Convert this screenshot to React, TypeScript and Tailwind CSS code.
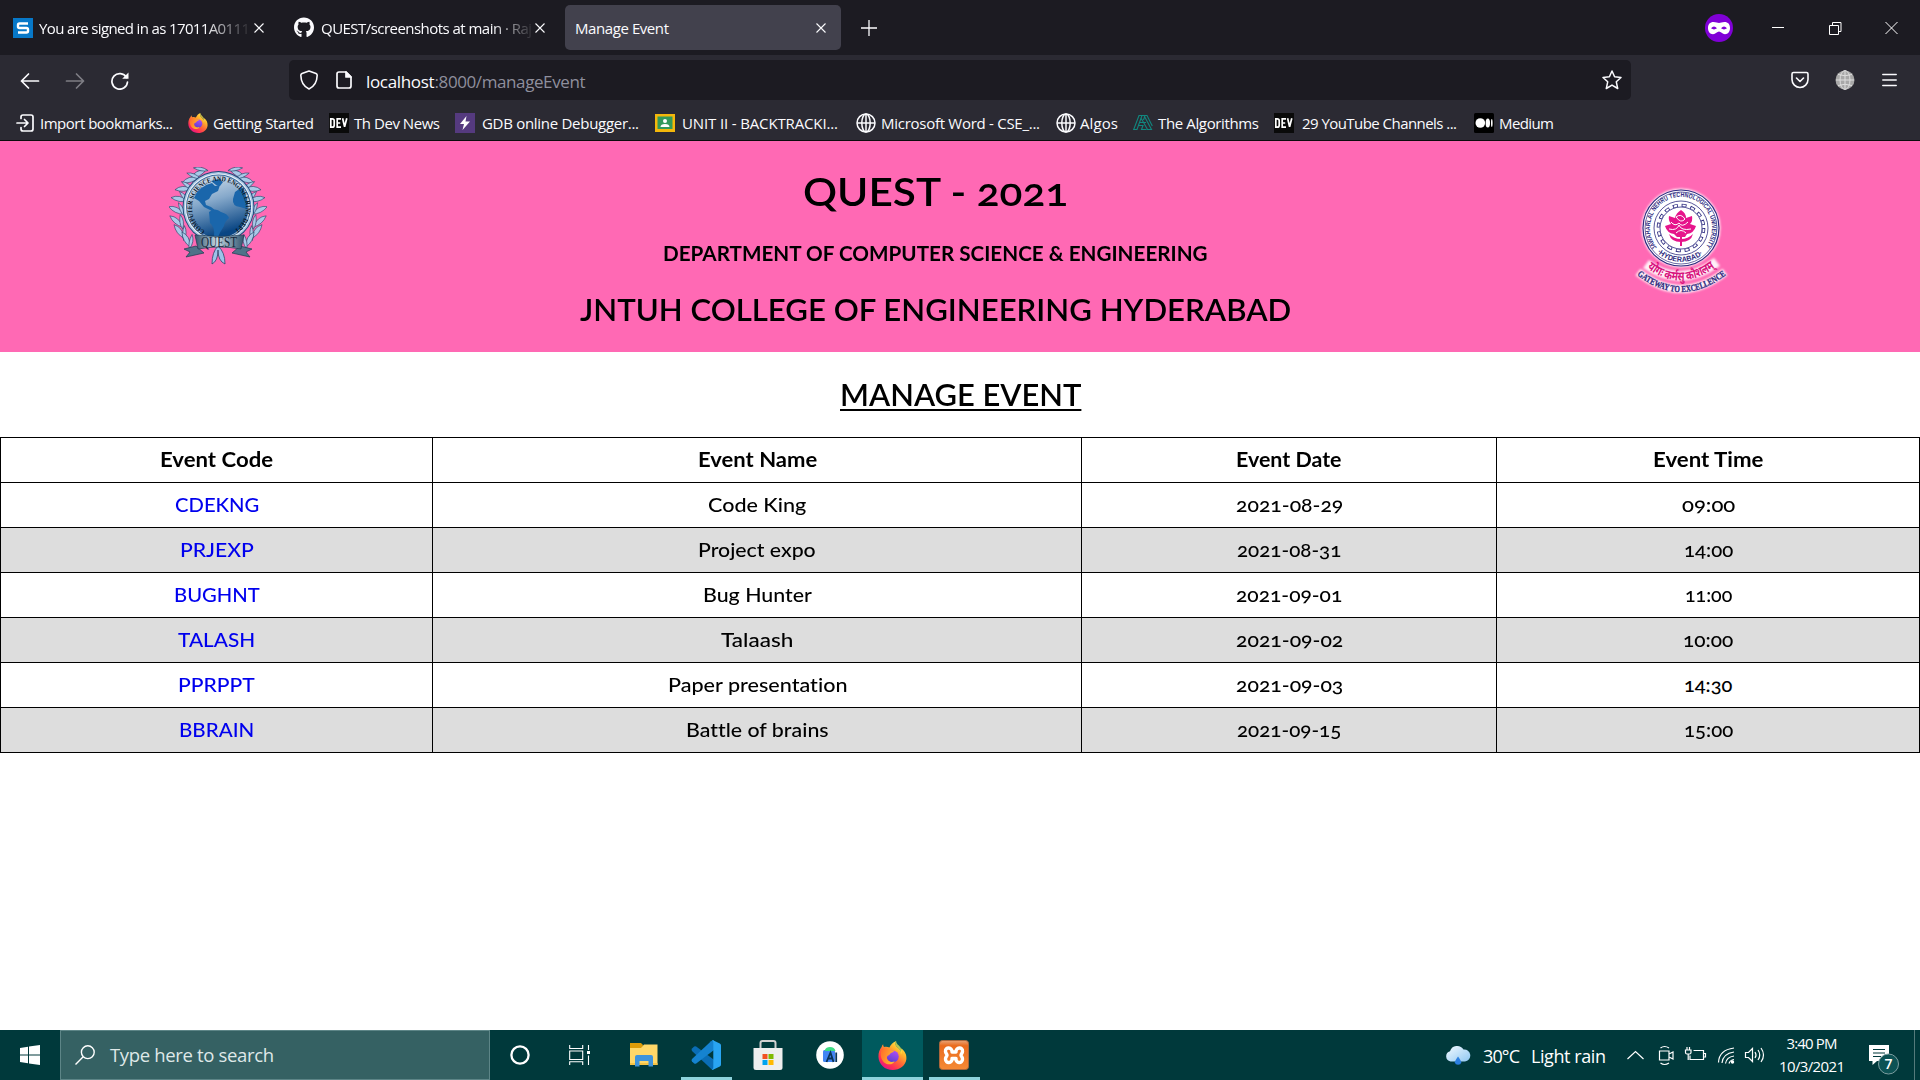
import { useLayoutEffect, useRef, useState } from "react";
import type { ReactNode } from "react";
import { FaGithub } from "react-icons/fa";

/** A single line of text whose tracking is adjusted to fill the given width. */
function Fit({ w, children, className = "" }: { w: number; children: string; className?: string }) {
  const ref = useRef<HTMLSpanElement>(null);
  const [spacing, setSpacing] = useState(0);
  useLayoutEffect(() => {
    const natural = ref.current!.getBoundingClientRect().width;
    setSpacing((w - natural) / Math.max(1, children.length - 1));
  }, [w, children]);
  return (
    <span className={`block shrink-0 whitespace-nowrap text-left ${className}`} style={{ width: w }}>
      <span ref={ref} style={{ letterSpacing: spacing }}>{children}</span>
    </span>
  );
}

/** A single line of text whose glyphs are widened to fill the given width. */
function Wide({ w, children, className = "" }: { w: number; children: string; className?: string }) {
  const ref = useRef<HTMLSpanElement>(null);
  const [scale, setScale] = useState(1);
  useLayoutEffect(() => {
    setScale(w / ref.current!.offsetWidth);
  }, [w, children]);
  return (
    <span className={`block shrink-0 whitespace-nowrap text-left ${className}`} style={{ width: w }}>
      <span ref={ref} className="inline-block origin-left" style={{ transform: `scaleX(${scale})` }}>{children}</span>
    </span>
  );
}

function CloseIcon() {
  return (
    <svg viewBox="0 0 10 10" className="h-2.5 w-2.5 shrink-0" stroke="#fbfbfe" strokeWidth="1.1">
      <path d="M.5 .5l9 9M9.5 .5l-9 9" />
    </svg>
  );
}

function FirefoxIcon({ id, className }: { id: string; className: string }) {
  return (
    <svg viewBox="0 0 32 32" className={className}>
      <defs>
        <linearGradient id={`${id}a`} x1="0.85" y1="0.05" x2="0.2" y2="0.95">
          <stop offset="0" stopColor="#fff44f" />
          <stop offset="0.3" stopColor="#ffb32c" />
          <stop offset="0.55" stopColor="#ff6b36" />
          <stop offset="0.8" stopColor="#ff2f55" />
          <stop offset="1" stopColor="#e31587" />
        </linearGradient>
        <linearGradient id={`${id}b`} x1="0.7" y1="0" x2="0.3" y2="1">
          <stop offset="0" stopColor="#b04df5" />
          <stop offset="1" stopColor="#5b3fd0" />
        </linearGradient>
        <linearGradient id={`${id}c`} x1="0" y1="0" x2="1" y2="0.4">
          <stop offset="0" stopColor="#ff6a2a" />
          <stop offset="1" stopColor="#ffb52e" />
        </linearGradient>
      </defs>
      <path fill={`url(#${id}a)`} d="M20 0c-1.500 3.200-.8 5.200 1.600 7.300 1.800 1.500 2.900 2.900 3.300 4.500.8-.9.900-2.300.5-3.800 4.400 3 6.400 7.300 5.900 12.200C30.500 27.200 24 32 16.200 32 7.800 32 .7 25.800.5 17.300.4 12.500 1.700 9.200 4 6.500c.2-.9.700-2.100 1.700-3-.1 1.300.2 2.400.9 3.200 2.300-.6 4.200-.3 6 .6 1.400-3.200 3.700-5.900 7.400-7.300z" />
      <circle cx="16.300" cy="17" r="6.600" fill={`url(#${id}b)`} />
      <path fill={`url(#${id}c)`} d="M3.500 11c2.400-3.300 6.600-3.900 10.300-1.200 1.500.6 2.800.7 4 .6-.2 1.700-2.500 2-4.200 3.400-.6.600-.8 1.500-1.800 1.900-1.300.5-2.500 1.800-1.900 3.800 1 3 5 4.600 8.500 2.800-1.600 3.800-7.500 4.800-11.700 1.300C3.500 20.700 2.300 15.700 3.500 11z" />
      <path fill="#fff44f" opacity=".7" d="M20 0c-1.500 3.200-.8 5.200 1.600 7.300 2.400 2 3.800 4.200 3.700 8.200 2-4.500.3-8-2.300-10.500C21 3.200 20 2 20 0z" />
    </svg>
  );
}

function GlobeIcon() {
  return (
    <svg viewBox="0 0 20 20" className="h-5 w-5 shrink-0" fill="none" stroke="#fbfbfe" strokeWidth="1.500">
      <circle cx="10" cy="10" r="9" />
      <ellipse cx="10" cy="10" rx="4.200" ry="9" />
      <path d="M10 1v18M1 10h18" />
    </svg>
  );
}

function DevIcon() {
  return (
    <svg viewBox="0 0 20 20" className="h-5 w-5 shrink-0">
      <path fill="#0a0a0a" d="M0 0h20v20H0z" />
      <path fill="none" stroke="#fff" strokeWidth="1.700" d="M1.800 5.800v8.400h1.400q2 0 2-2V7.800q0-2-2-2zM12 5.800H8.200v8.400H12M8.200 10h3M13.600 5.200l2 8.600 2.200-8.600" />
    </svg>
  );
}

function Tabs() {
  return (
    <div className="flex h-[55px] items-center bg-[#1c1b22] text-[15px] text-[#fbfbfe]">
      <svg viewBox="0 0 20 20" className="ml-[13px] h-5 w-5 shrink-0">
        <path fill="#0778c8" d="M0 0h20v20H0z" />
        <path fill="none" stroke="#fff" strokeWidth="2.400" strokeLinejoin="round" d="M15 5.500H6.500q-1.500 0-1.500 1.500v1.500Q5 10 6.500 10h7q1.500 0 1.500 1.500V13q0 1.500-1.500 1.500H5" />
      </svg>
      <div className="ml-1.5 mt-px w-[215px] overflow-hidden [mask-image:linear-gradient(to_right,#000_165px,transparent_213px)]">
        <Fit w={211}>You are signed in as 17011A0111</Fit>
      </div>
      <CloseIcon />
      <FaGithub className="ml-[30px] h-[21px] w-5 shrink-0" />
      <div className="ml-[7px] mt-px w-[215px] overflow-hidden [mask-image:linear-gradient(to_right,#000_170px,transparent_214px)]">
        <Fit w={211}>QUEST/screenshots at main · Raj</Fit>
      </div>
      <span className="-ml-px"><CloseIcon /></span>
      <div className="ml-5 flex h-[45px] w-[276px] items-center justify-between rounded-[5px] bg-[#42414d] pl-2.5 pr-[15px]">
        <Fit w={94} className="mt-px">Manage Event</Fit>
        <CloseIcon />
      </div>
      <svg viewBox="0 0 16 16" className="ml-5 h-4 w-4" stroke="#fbfbfe" strokeWidth="1.300">
        <path d="M8 0v16M0 8h16" />
      </svg>
      <svg viewBox="0 0 28 28" className="ml-auto h-7 w-7">
        <circle cx="14" cy="14" r="14" fill="#8000d7" />
        <path fill="#fff" d="M8.500 8c2.500 0 4 1 5.500 1s3-1 5.500-1c3.500 0 5.500 2.200 5.500 6 0 3.500-2 6.200-5 6.200-2.700 0-4.200-2.700-6-2.700s-3.300 2.700-6 2.700c-3 0-5-2.700-5-6.200 0-3.800 2-6 5.500-6z" />
        <path fill="#8000d7" d="M6 14.300q3-3.600 6 0-3 2.200-6 0zM16 14.300q3-3.600 6 0-3 2.200-6 0z" />
      </svg>
      <svg viewBox="0 0 126 14" className="ml-[39px] mr-[22px] h-3.5 w-[126px]" fill="none" stroke="#fff">
        <path d="M0 6.500h12M57.500 4.500h9v9h-9zM60.500 4V1.500h8.500v9H67M113.500 1l12 12M125.500 1l-12 12" />
      </svg>
    </div>
  );
}

function Toolbar() {
  return (
    <div className="flex h-[50px] items-center bg-[#2b2a33] text-[#fbfbfe]">
      <svg viewBox="0 0 110 20" className="ml-5 h-5 w-[110px] shrink-0" fill="none" stroke="#fbfbfe" strokeWidth="1.700">
        <path strokeLinecap="round" strokeLinejoin="round" d="M18.500 11H1.500M8.500 4l-7 7 7 7" />
        <path opacity=".4" strokeLinecap="round" strokeLinejoin="round" d="M46.500 11h17M56.500 4l7 7-7 7" />
        <path d="M106.500 7.500A7.800 7.800 0 1 0 107.500 12" strokeLinecap="round" />
        <path d="M108.500 2.500v6.300h-6.300z" fill="#fbfbfe" stroke="none" />
      </svg>
      <div className="ml-[159px] flex h-10 w-[1342px] shrink-0 items-center rounded-[5px] bg-[#1c1b22] pl-[11px] pr-[9px]">
        <svg viewBox="0 0 18 20" className="h-5 w-[18px]" fill="none" stroke="#fbfbfe" strokeWidth="1.600" strokeLinejoin="round">
          <path d="M9 1l7 2.500c1 .4 1.200 1 1.200 1.800C17 12 14.500 16.500 9 19 3.500 16.500 1 12 .8 5.300.8 4.500 1 3.900 2 3.500z" />
        </svg>
        <svg viewBox="0 0 16 18" className="ml-[18px] h-[18px] w-4" fill="none" stroke="#fbfbfe" strokeWidth="1.700" strokeLinejoin="round">
          <path d="M3 1h7l5 5v9q0 2-2 2H3q-2 0-2-2V3q0-2 2-2z" />
          <path fill="#fbfbfe" d="M10 1v5h5z" />
        </svg>
        <div className="ml-3.5 mt-[3px] flex text-[17px]">
          <Fit w={68.500}>localhost</Fit>
          <Fit w={151} className="text-[#8f8f9d]">:8000/manageEvent</Fit>
        </div>
        <svg viewBox="0 0 20 20" className="ml-auto h-5 w-5" fill="none" stroke="#fbfbfe" strokeWidth="1.500" strokeLinejoin="round">
          <path d="M10 1l2.600 5.800 6.400.7-4.700 4.300 1.400 6.700L10 15.100l-5.700 3.400 1.400-6.700L1 7.500l6.400-.7z" />
        </svg>
      </div>
      <svg viewBox="0 0 18 18" className="ml-[160px] h-[18px] w-[18px]" fill="none" stroke="#fbfbfe" strokeWidth="1.600" strokeLinecap="round" strokeLinejoin="round">
        <path d="M2.500 1.500h13q1.500 0 1.500 1.500v5.500a8 8 0 0 1-16 0V3q0-1.500 1.500-1.500zM5.500 7L9 10.500 12.500 7" />
      </svg>
      <svg viewBox="0 0 20 20" className="ml-[26px] h-5 w-5" fill="none" stroke="#dedede" strokeWidth="1">
        <circle cx="10" cy="10" r="9.500" fill="#a8a8a8" stroke="none" />
        <ellipse cx="10" cy="10" rx="5" ry="9.500" />
        <path d="M10 .5v19M1 10h18M3 4.500q7 2.500 14 0M3 15.500q7-2.500 14 0" />
      </svg>
      <svg viewBox="0 0 15 14" className="ml-[27px] h-3.5 w-[15px]" stroke="#fbfbfe" strokeWidth="1.500" strokeLinecap="round">
        <path d="M.8 1.500h13.400M.8 7h13.400M.8 12.500h13.400" />
      </svg>
    </div>
  );
}

function Bookmarks() {
  return (
    <div className="flex h-[36px] items-center border-b border-[#0c0c0d] bg-[#2b2a33] text-[15px] text-[#fbfbfe]">
      <svg viewBox="0 0 18 18" className="ml-4 h-[18px] w-[18px] shrink-0" fill="none" stroke="#fbfbfe" strokeWidth="1.700" strokeLinecap="round" strokeLinejoin="round">
        <path d="M5 4.500V3q0-2 2-2h8q2 0 2 2v12q0 2-2 2H7q-2 0-2-2v-1.500M1 9h10.500M8.500 5.500L12 9l-3.500 3.500" />
      </svg>
      <Fit w={133} className="ml-1.5 mt-0.5">Import bookmarks...</Fit>
      <FirefoxIcon id="bm" className="ml-[15px] h-5 w-5 shrink-0" />
      <Fit w={101} className="ml-[5px] mt-0.5">Getting Started</Fit>
      <span className="ml-[15px]"><DevIcon /></span>
      <Fit w={86} className="ml-[5px] mt-0.5">Th Dev News</Fit>
      <svg viewBox="0 0 20 20" className="ml-[15px] h-5 w-5 shrink-0">
        <path fill="#553a7f" d="M0 0h20v20H0z" />
        <path fill="#fff" d="M11.500 3L5 11h4l-1.500 6L15 8.500h-4.500z" />
      </svg>
      <Fit w={157} className="ml-[7px] mt-0.5">GDB online Debugger...</Fit>
      <svg viewBox="0 0 20 20" className="ml-4 h-5 w-5 shrink-0">
        <path fill="#f4b70b" d="M0 1h20v18H0z" />
        <path fill="#32995b" d="M2.500 3.500h15v12.500h-15z" />
        <circle cx="10" cy="8" r="2" fill="#fff" />
        <path fill="#fff" d="M5.500 14q0-3 4.500-3t4.500 3z" />
      </svg>
      <Fit w={156} className="ml-[7px] mt-0.5">UNIT II - BACKTRACKI...</Fit>
      <span className="ml-[18px]"><GlobeIcon /></span>
      <Fit w={159} className="ml-[5px] mt-0.5">Microsoft Word - CSE_...</Fit>
      <span className="ml-4"><GlobeIcon /></span>
      <Fit w={38} className="ml-1 mt-0.5">Algos</Fit>
      <svg viewBox="0 0 20 20" className="ml-[15px] h-5 w-5 shrink-0" fill="none" stroke="#11877f" strokeWidth="1.100">
        <path d="M.7 16.500L6 2.500h3L4 16.500zM9 2.500h2l7.500 14h-4L8 5M6 9.500h7M5 12.500h5l-1.500 4h5M10.500 7l1.500-4.500h2L19.300 13" />
      </svg>
      <Fit w={101} className="ml-[5px] mt-0.5">The Algorithms</Fit>
      <span className="ml-[15px]"><DevIcon /></span>
      <Fit w={155} className="ml-2 mt-0.5">29 YouTube Channels ...</Fit>
      <svg viewBox="0 0 20 20" className="ml-[17px] h-5 w-5 shrink-0" fill="#fff">
        <rect width="20" height="20" rx="1.500" fill="#000" />
        <circle cx="6.300" cy="10" r="4.800" />
        <ellipse cx="13.800" cy="10" rx="2.200" ry="4.500" />
        <ellipse cx="17.800" cy="10" rx="0.800" ry="4" />
      </svg>
      <Fit w={55} className="ml-[5px] mt-0.5">Medium</Fit>
    </div>
  );
}

const laurel = [
  [29, 7, -60], [21, 13, -48], [14, 22, -35], [10, 32, -20], [7, 43, -5], [7, 54, 10], [10, 64, 22], [17, 72, 30],
];

function QuestLogo() {
  const leaves = (
    <g fill="#a9c9e8" stroke="#27476b" strokeWidth="0.600">
      {laurel.map(([x, y, r]) => (
        <g key={y} transform={`translate(${x} ${y}) rotate(${r})`}>
          <path d="M-7-4Q2-5 8 5-2 4-7-4z" />
          <path d="M3-7Q9-2 8 7 3 2 3-7z" />
        </g>
      ))}
    </g>
  );
  return (
    <svg viewBox="0 0 98 98" className="h-[98px] w-[98px]">
      <defs>
        <linearGradient id="sea" x1="0" y1="0" x2="0.3" y2="1">
          <stop offset="0" stopColor="#d5e1ec" />
          <stop offset="0.450" stopColor="#86a9cb" />
          <stop offset="1" stopColor="#0a4684" />
        </linearGradient>
        <linearGradient id="ribbon" x1="0" y1="0" x2="1" y2="0">
          <stop offset="0" stopColor="#33566f" />
          <stop offset="0.450" stopColor="#c4d6e2" />
          <stop offset="1" stopColor="#33566f" />
        </linearGradient>
        <path id="questArc" d="M36 64A27 27 0 1 1 64 64" />
      </defs>
      {leaves}
      <g transform="translate(98 0) scale(-1 1)">{leaves}</g>
      <g transform="translate(0 1)">
        <circle cx="49.500" cy="39" r="36" fill="#1f4a7a" />
        <circle cx="49.500" cy="39" r="35" fill="#a9c6e2" />
        <circle cx="49.500" cy="39" r="33.500" fill="#f1f6fb" />
        <circle cx="49.500" cy="39" r="32.500" fill="#3c6c9f" />
        <circle cx="49.500" cy="39" r="31.500" fill="#c3d5e6" />
        <circle cx="49.500" cy="40" r="30" fill="url(#sea)" />
        <path fill="#1a66ab" d="M25 30q5-12 18-15l3 3 5-1-2 6-6 3-3 5-4 2 1 4 5 2 4 3-3 1-8-4-5-6zM42 13l8-2 4 3-3 4-4-1zM40 44q6-5 12 0 7 2 8 6-4 3-5 8-4 6-6 11l-4-1q1-9-4-13zM66 24l7-5q6 9 5 22l-7-2q-8-1-7-8z" />
      </g>
      <text fill="#07131f" className="font-['Liberation_Serif'] text-[7px] font-bold">
        <textPath href="#questArc" textLength="138" lengthAdjust="spacingAndGlyphs">COMPUTER SCIENCE AND ENGINEERING DEPT</textPath>
      </text>
      <path fill="#9cc3ea" stroke="#27476b" strokeWidth="0.800" d="M49 79q-6 6-6 18 6-3 6-14 0 11 7 14 0-12-7-18z" />
      <path fill="#4f7289" stroke="#1c3950" strokeWidth="0.700" d="M27 79l-12 3 6 3-4 5 18-4zM71 79l12 3-6 3 4 5-18-4z" />
      <path fill="url(#ribbon)" stroke="#1c3950" strokeWidth="0.700" d="M26 68q24 3 49 0l-3 14q-22-4-43 0z" />
      <text x="50" y="79.500" textAnchor="middle" textLength="36" lengthAdjust="spacingAndGlyphs" fill="#16293d" className="font-['Liberation_Serif'] text-[14px]">QUEST</text>
    </svg>
  );
}

function JntuLogo() {
  return (
    <svg viewBox="0 0 100 116" className="h-[116px] w-[100px] overflow-visible">
      <defs>
        <path id="jntuTop" d="M26 59.500A31 31 0 1 1 74 59.500" />
        <path id="jntuBottom" d="M26 64.500A35.500 35.500 0 0 0 74 64.500" />
        <path id="mottoArc" d="M16 80Q49 106 86 78" />
        <path id="gatewayArc" d="M6 87Q50 121 95 87" />
        <filter id="glow" x="-20%" y="-20%" width="140%" height="140%">
          <feGaussianBlur stdDeviation="1.300" />
        </filter>
      </defs>
      <g filter="url(#glow)" fill="none" stroke="#fff" opacity=".9">
        <circle cx="50" cy="40" r="39" fill="#fff" />
        <path d="M15 76Q50 101 86 74" strokeWidth="10" />
        <path d="M7 84Q50 118 94 84" strokeWidth="8" />
      </g>
      <circle cx="50" cy="40" r="38" fill="#fff" stroke="#2d2b80" strokeWidth="1.200" />
      <circle cx="50" cy="40" r="36" fill="none" stroke="#2d2b80" strokeWidth="0.700" />
      <circle cx="50" cy="40" r="27" fill="none" stroke="#2d2b80" strokeWidth="0.800" />
      <circle cx="50" cy="40" r="22.800" fill="none" stroke="#2d2b80" strokeWidth="3" strokeDasharray="5 3.950" />
      <circle cx="50" cy="40" r="22.600" fill="none" stroke="#fff" strokeWidth="1.800" strokeDasharray="3.200 5.675" strokeDashoffset="-0.900" />
      <circle cx="50" cy="40" r="21" fill="#fff" stroke="#2d2b80" strokeWidth="0.800" />
      <g fill="#e6148b">
        <path d="M50 22q5 3 5 8l6-2q1 5-2 8l6 2q-2 7-9 8l-2 3h-8l-3-3q-7-1-9-8l6-2q-3-4-2-8l6 2q1-5 6-8z" />
        <path d="M38 46q5 5 12 5t12-5q-2 8-12 8t-12-8z" />
        <path d="M49 47h2v11h-2z" />
      </g>
      <path fill="none" stroke="#fff" strokeWidth="1" d="M45 29q5-4 9 2-4 5-9-2zM40 34q4 5 8 1 3 5 9-1M38 41q8 2 10-4 2 6 12 4M45 45q5-5 10 0" />
      <text fill="#2d2b80" className="font-['Liberation_Sans'] text-[6.500px] font-bold">
        <textPath href="#jntuTop" textLength="138" lengthAdjust="spacingAndGlyphs">JAWAHARLAL NEHRU TECHNOLOGICAL UNIVERSITY</textPath>
      </text>
      <text fill="#2d2b80" className="font-['Liberation_Sans'] text-[7.500px] font-bold">
        <textPath href="#jntuBottom" textLength="50" lengthAdjust="spacingAndGlyphs">·HYDERABAD·</textPath>
      </text>
      <text fill="#d8127d" className="font-['Noto_Sans','Noto_Sans_Devanagari',sans-serif] text-[12.500px] font-bold">
        <textPath href="#mottoArc" textLength="74" lengthAdjust="spacingAndGlyphs">योगः कर्मसु कौशलम्</textPath>
      </text>
      <text fill="#2d2b80" stroke="#2d2b80" strokeWidth="0.300" className="font-['Liberation_Serif'] text-[9px] font-bold">
        <textPath href="#gatewayArc" textLength="97" lengthAdjust="spacingAndGlyphs">GATEWAY TO EXCELLENCE</textPath>
      </text>
    </svg>
  );
}

function Banner() {
  return (
    <header className="flex h-[211px] items-start bg-[#ff69b4] text-black">
      <div className="ml-[169px] mt-[26px] w-[98px] shrink-0"><QuestLogo /></div>
      <div className="ml-[312px] flex w-[712px] flex-col items-center font-semibold">
        <Wide w={265} className="mt-[26px] text-[39px] leading-[48px] [font-variant-numeric:oldstyle-nums]">QUEST - 2021</Wide>
        <Wide w={545} className="mt-6 text-[21px] font-bold leading-7">DEPARTMENT OF COMPUTER SCIENCE & ENGINEERING</Wide>
        <Wide w={711} className="mt-[22px] text-[30px] leading-10">JNTUH COLLEGE OF ENGINEERING HYDERABAD</Wide>
      </div>
      <div className="ml-[340px] mt-[47px]"><JntuLogo /></div>
    </header>
  );
}

const headings: [string, number][] = [["Event Code", 113], ["Event Name", 119], ["Event Date", 106], ["Event Time", 110]];

const events: [string, number][][] = [
  [["CDEKNG", 84], ["Code King", 98], ["2021-08-29", 107], ["09:00", 53]],
  [["PRJEXP", 74], ["Project expo", 118], ["2021-08-31", 104], ["14:00", 49]],
  [["BUGHNT", 86], ["Bug Hunter", 109], ["2021-09-01", 106], ["11:00", 47]],
  [["TALASH", 77], ["Talaash", 72], ["2021-09-02", 107], ["10:00", 50]],
  [["PPRPPT", 77], ["Paper presentation", 179], ["2021-09-03", 107], ["14:30", 48]],
  [["BBRAIN", 75], ["Battle of brains", 143], ["2021-09-15", 104], ["15:00", 49]],
];

function EventTable() {
  return (
    <div className="border-l border-t border-black text-[20px] font-medium text-black [font-variant-ligatures:none] [font-variant-numeric:oldstyle-nums]">
      <div className="grid grid-cols-[432px_649px_415px_423px] font-bold">
        {headings.map(([label, w]) => (
          <div key={label} className="flex h-[45px] items-center justify-center border-b border-r border-black pb-0.5">
            <Wide w={w}>{label}</Wide>
          </div>
        ))}
      </div>
      {events.map((row) => (
        <div key={row[0][0]} className="grid grid-cols-[432px_649px_415px_423px] odd:bg-[#ddd]">
          {row.map(([label, w], i) => (
            <div key={label} className={`flex h-[45px] items-center justify-center border-b border-r border-black pb-0.5 ${i === 0 ? "text-[#0000ee]" : ""}`}>
              <Wide w={w}>{label}</Wide>
            </div>
          ))}
        </div>
      ))}
    </div>
  );
}

function TaskButton({ children, open, active, className = "" }: { children: ReactNode; open?: boolean; active?: boolean; className?: string }) {
  return (
    <div className={`flex h-[50px] shrink-0 items-center justify-center border-b-[3px] pt-[3px] ${open ? "border-[#8ed3dc]" : "border-transparent"} ${active ? "bg-[#005a5e]" : ""} ${className}`}>
      {children}
    </div>
  );
}

function Taskbar() {
  return (
    <footer className="flex h-[50px] items-center bg-[#00393b] text-white">
      <svg viewBox="0 0 20 20" className="ml-5 h-5 w-5 shrink-0" fill="#fff">
        <path d="M0 3l8-1.200v7.700H0zM9 1.600L20 0v9.500H9zM0 10.500h8v7.700L0 17zM9 10.500h11V20L9 18.400z" />
      </svg>
      <div className="ml-5 flex h-[50px] w-[430px] shrink-0 items-center border border-[#5d8587] bg-[#356163] pl-3.5 text-[#dfe8e8]">
        <svg viewBox="0 0 20 20" className="h-5 w-5" fill="none" stroke="#fff" strokeWidth="1.400">
          <circle cx="12.800" cy="7.200" r="6.400" />
          <path d="M8.200 11.800L.5 19.500" />
        </svg>
        <Fit w={164} className="ml-[15px] text-[18.500px]">Type here to search</Fit>
      </div>
      <svg viewBox="0 0 20 20" className="ml-5 h-5 w-5 shrink-0" fill="none" stroke="#fff" strokeWidth="2.300">
        <circle cx="10" cy="10" r="8.600" />
      </svg>
      <svg viewBox="0 0 21 20" className="ml-[39px] h-5 w-[21px] shrink-0" fill="none" stroke="#fff" strokeWidth="1.100">
        <path d="M.7 0v3.500h13V0M.7 6h13v8.500H.7zM.7 20v-3.300h13V20M19.500 0v5M19.500 10.500V20" />
        <path fill="#fff" stroke="none" d="M18 6h3v3h-3z" />
      </svg>
      <svg viewBox="0 0 28 24" className="ml-10 h-6 w-7 shrink-0">
        <path fill="#dd9b08" d="M0 0h11l2 2-1 4H0z" />
        <path fill="#ffd768" d="M0 5h11l3-3.500h13.500V22H0z" />
        <path fill="#f6c344" d="M0 20h27.500v2H0z" />
        <path fill="#3d93dc" d="M5 23.500V14q0-2 2-2h14q2 0 2 2v9.500h-4.500V18h-9v5.500z" />
      </svg>
      <TaskButton open className="ml-[23px] w-[51px]">
        <svg viewBox="0 0 30 30" className="mr-px h-[30px] w-[30px]">
          <path fill="#0a6db5" d="M1 8.500l2.200-2q1-.7 2 0L28 23.500 22 29.800q-1.200-.3-2-1L1 11q-1-1.200 0-2.500z" />
          <path fill="#1583d0" d="M1 21.500l2.200 2q1 .7 2 0L23 10V.200q-1.500 0-3 1L1 19q-1 1.200 0 2.500z" />
          <path fill="#29a5f3" d="M22 .2L28.800 3.400q1.200.7 1.200 2v19.200q0 1.300-1.200 2L22 29.800q-.8 0-1.500-.5 1.800.2 1.800-1.800v-25Q22.300.500 20.500.700 21.200.200 22 .200z" />
        </svg>
      </TaskButton>
      <svg viewBox="0 0 30 30" className="ml-[21px] h-[30px] w-[30px] shrink-0">
        <path fill="none" stroke="#d0d0d0" strokeWidth="2" d="M7.500 10V3q0-2 2-2h11q2 0 2 2v7" />
        <path fill="#eee" d="M.5 8h29v19.500q0 2.500-2.500 2.500H3q-2.500 0-2.500-2.500z" />
        <path fill="#f25022" d="M9.500 14h5v5h-5z" />
        <path fill="#7fba00" d="M15.500 14h5v5h-5z" />
        <path fill="#00a4ef" d="M9.500 20h5v5h-5z" />
        <path fill="#ffb900" d="M15.500 20h5v5h-5z" />
      </svg>
      <svg viewBox="0 0 28 28" className="ml-[33px] h-7 w-7 shrink-0">
        <circle cx="14" cy="14" r="13.800" fill="#fff" />
        <rect x="7" y="9" width="12" height="12" rx="1.500" fill="#4285f4" />
        <path fill="#3ddc84" d="M8.500 10q1-4 5.500-4t5.500 4z" />
        <path fill="none" stroke="#0a3358" strokeWidth="1.800" d="M10.500 21l4-9.500 3 9.500M12 17.500h5M20.200 11.500V21" />
      </svg>
      <TaskButton open active className="ml-[18px] w-[61px]">
        <FirefoxIcon id="tb" className="mr-px h-[29px] w-[29px]" />
      </TaskButton>
      <TaskButton open className="ml-1.5 w-[51px]">
        <svg viewBox="0 0 30 30" className="mr-px h-[30px] w-[30px]">
          <defs>
            <linearGradient id="xampp" x1="0" y1="0" x2="0" y2="1">
              <stop offset="0" stopColor="#e9a477" />
              <stop offset="0.180" stopColor="#ea6b1e" />
              <stop offset="1" stopColor="#f58a36" />
            </linearGradient>
          </defs>
          <rect x="0.500" y="0.500" width="29" height="29" rx="3" fill="url(#xampp)" stroke="#a9663c" />
          <path fill="none" stroke="#fff" strokeWidth="3.400" strokeLinecap="round" strokeLinejoin="round" d="M13 12C13.500 7 6 6.500 6.500 11.500 6.700 13.500 8 14 8 15.200S6.500 17 6.500 19C6.500 24 13.500 23.500 13 18.500H17C16.500 23.500 23.500 24 23.500 19 23.500 17 22 16.400 22 15.200S23.300 13.500 23.500 11.500C24 6.500 16.500 7 17 12z" />
        </svg>
      </TaskButton>

      <svg viewBox="0 0 26 20" className="ml-auto h-5 w-[26px] shrink-0">
        <defs>
          <linearGradient id="cloud" x1="0" y1="0" x2="1" y2="1">
            <stop offset="0" stopColor="#f3faff" />
            <stop offset="1" stopColor="#8fc7f2" />
          </linearGradient>
        </defs>
        <path fill="url(#cloud)" d="M5.500 16.500a5.300 5.300 0 0 1-.5-10.300A7.500 7.500 0 0 1 18.500 4.500a6 6 0 1 1 1.500 12z" />
        <path fill="#2d7fe0" d="M13 11.500q3.300 4.500 3.300 6a3.300 2.800 0 0 1-6.500 0q0-1.500 3.200-6z" />
      </svg>
      <Fit w={37} className="ml-3 mt-0.5 text-[18px]">30°C</Fit>
      <Fit w={75} className="ml-[11px] mt-0.5 text-[18px]">Light rain</Fit>
      <svg viewBox="0 0 140 24" className="ml-[21px] h-6 w-[140px] shrink-0" fill="none" stroke="#fff" strokeWidth="1.200">
        <path d="M.5 16L8.500 8.500l8 7.500" />
        <path d="M32.500 8h9.500v9h-9.500zM42 11l4-2v7l-4-2M33.500 5q4-3 8.500 0M33.500 20q4 3 8.500 0" />
        <path d="M66.500 7.500h10v9h-13.500v-4M76.500 10.500h2v3.500h-2M60 4v3M62.500 4v3M58.500 7h5.500v2.500q0 1.500-1.500 1.500h-2.500Q58.500 11 58.500 9.500zM61.200 11v6" />
        <path d="M91.500 19.500Q92 7 107 5M95 20Q96 10.500 107 9M98.500 20.500Q99.500 14 107 13M102 20.500q1-3.500 5-4" />
        <circle cx="105.500" cy="19" r="1.700" fill="#fff" stroke="none" />
        <path d="M118.500 9.500h3l4-4v13l-4-4h-3zM128 9q2 3 0 6M131 7q3.500 5 0 10M134 5q5 7 0 14" />
      </svg>
      <div className="ml-3 flex w-[66px] shrink-0 flex-col items-center text-[15px] leading-[23px]">
        <Fit w={51}>3:40 PM</Fit>
        <Fit w={66}>10/3/2021</Fit>
      </div>
      <svg viewBox="0 0 32 32" className="ml-6 mt-[3px] h-8 w-8 shrink-0 overflow-visible">
        <path fill="#fff" d="M0 4h20v16H8l-4.500 4v-4H0z" />
        <path stroke="#00393b" strokeWidth="1.200" d="M4 8.500h12M4 12h12M4 15.500h8" />
        <circle cx="19.500" cy="23" r="10" fill="#0d5254" stroke="#7c9ea0" />
        <text x="19.500" y="28" textAnchor="middle" fill="#fff" className="text-[14px] font-semibold">7</text>
      </svg>
      <div className="ml-[13px] mr-[5px] h-[50px] w-px bg-[#547a7b]" />
    </footer>
  );
}

export default function App() {
  return (
    <div className="flex h-[1080px] w-[1920px] flex-col overflow-hidden bg-white font-['Open_Sans',sans-serif]">
      <Tabs />
      <Toolbar />
      <Bookmarks />
      <main className="flex-1 font-['Lato',sans-serif]">
        <Banner />
        <div className="flex h-[85px] items-center justify-center">
          <Wide w={241} className="text-[30px] font-semibold text-black [&>span]:underline [&>span]:decoration-2 [&>span]:underline-offset-[3px]">MANAGE EVENT</Wide>
        </div>
        <EventTable />
      </main>
      <Taskbar />
    </div>
  );
}
